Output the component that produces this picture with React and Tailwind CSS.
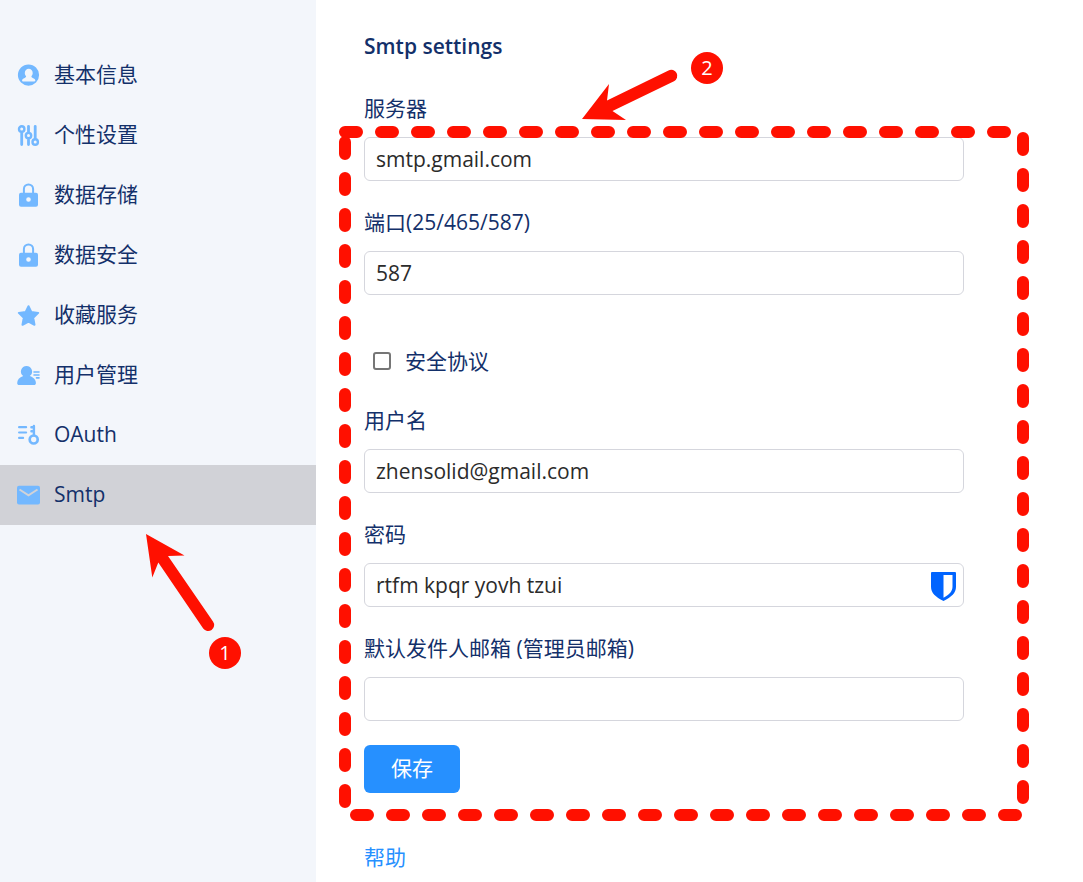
import React from 'react';

function Icon({ children }) {
  return (
    <svg className="size-6 shrink-0 text-[#73b8ff]" viewBox="0 0 24 24" fill="currentColor" aria-hidden="true">
      {children}
    </svg>
  );
}

const ProfileIcon = () => (
  <Icon>
    <path
      fillRule="evenodd"
      d="M11.500 1.500a10.600 10.600 0 1 0 0 21.200 10.600 10.600 0 0 0 0-21.200Zm.200 4.300c2.200 0 4 1.900 4 4.300 0 1.300-.500 2.500-1.300 3.200 0 .900.400 1.300 1.300 1.600 1.700.600 2.600 1.200 2.600 2.700 0 .700-.300.900-.900.900H6c-.700 0-.900-.300-.900-.900 0-1.500 1-2.100 2.600-2.700.900-.300 1.400-.700 1.400-1.600-.800-.700-1.300-1.900-1.300-3.200 0-2.400 1.800-4.300 3.900-4.300Z"
    />
  </Icon>
);

const SlidersIcon = () => (
  <Icon>
    <g fill="none" stroke="currentColor" strokeWidth="2.800" strokeLinecap="round">
      <circle cx="4.700" cy="5.900" r="2.700" strokeWidth="2.400" />
      <path d="M4.700 9.500v12M11.500 3.300v5.500M11.500 16.800v4.700M18.200 3.300v12" />
      <circle cx="11.500" cy="12.600" r="2.700" strokeWidth="2.400" />
      <circle cx="18.200" cy="19" r="2.700" strokeWidth="2.400" />
    </g>
  </Icon>
);

const LockIcon = () => (
  <Icon>
    <path
      fillRule="evenodd"
      d="M4 9.800h1.900V6a5.600 5.600 0 0 1 11.200 0v3.800H19a2 2 0 0 1 2 2v10a2 2 0 0 1-2 2H4a2 2 0 0 1-2-2v-10a2 2 0 0 1 2-2Zm3.900 0h7.200V6a3.600 3.600 0 0 0-7.200 0v3.800Zm3.600 4.400a2.300 2.300 0 1 0 0 4.600 2.300 2.300 0 0 0 0-4.600Z"
    />
  </Icon>
);

const StarIcon = () => (
  <Icon>
    <path
      stroke="currentColor"
      strokeWidth="2"
      strokeLinejoin="round"
      d="m11.500 3.200 2.800 5.800 6.900.900-5 4.900 1.300 7-6-3.300-6 3.300 1.300-7-5-4.900 6.900-.900 2.800-5.800Z"
    />
  </Icon>
);

const UsersIcon = () => (
  <Icon>
    <path d="M9.500 3a5.600 5.600 0 0 1 3.300 10.100c3.800 1.300 6.100 3.900 6.100 6.900 0 1.400-.700 2-2 2H2.200c-1.300 0-2-.600-2-2 0-3 2.200-5.600 6-6.900A5.600 5.600 0 0 1 9.500 3Z" />
    <path d="M17 9h5M17 12h5M19.500 14.900h2.500" fill="none" stroke="currentColor" strokeWidth="1.600" strokeLinecap="round" />
  </Icon>
);

const KeyIcon = () => (
  <Icon>
    <g fill="none" stroke="currentColor" strokeWidth="2.200" strokeLinecap="round">
      <path d="M2.100 4.200h7M2.100 9.500h7M2.100 14.900h4" />
      <circle cx="16.700" cy="16.500" r="4" strokeWidth="2.700" />
      <path d="M16.900 2.900v9.400M16.400 4.200h-2M16.400 8.300h-2" strokeWidth="2.400" />
    </g>
  </Icon>
);

const MailIcon = () => (
  <Icon>
    <rect x="0" y="2.800" width="23" height="18.800" rx="2" />
    <path d="m2.500 6.500 9 5.800 9-5.800" fill="none" stroke="#d1d2d7" strokeWidth="2" />
  </Icon>
);

const menu = [
  { label: '基本信息', Glyph: ProfileIcon },
  { label: '个性设置', Glyph: SlidersIcon },
  { label: '数据存储', Glyph: LockIcon },
  { label: '数据安全', Glyph: LockIcon },
  { label: '收藏服务', Glyph: StarIcon },
  { label: '用户管理', Glyph: UsersIcon },
  { label: 'OAuth', Glyph: KeyIcon },
  { label: 'Smtp', Glyph: MailIcon, active: true },
];

function Field({ id, label, value, children }) {
  return (
    <div className="flex flex-col gap-[14px]">
      <label htmlFor={id} className="leading-[30px]">{label}</label>
      <div className="relative">
        <input
          id={id}
          type="text"
          defaultValue={value}
          className="block h-11 w-full rounded-md border border-[#d5d6dd] bg-white px-[11px] text-[#2b2b2b] outline-none focus:border-[#2690ff]"
        />
        {children}
      </div>
    </div>
  );
}

function Annotations() {
  return (
    <div className="pointer-events-none absolute inset-0 overflow-hidden">
      <svg className="block h-[882px] w-[1083px]" viewBox="0 0 1083 882" fill="#ff1000" aria-hidden="true">
        <path
          d="M345 132H1023V815H345V132"
          fill="none"
          stroke="#ff1000"
          strokeWidth="12"
          strokeLinecap="round"
          strokeDasharray="12 24"
        />
        <path d="M146 534 184.500 555.500 168 556 213 621.500A6 6 0 0 1 203.200 628.500L158.300 562.500 152.300 577.500Z" />
        <path d="M582 119 609 84 607 100.500 668.500 70.500A6 6 0 0 1 674 81.200L612.500 111 626 120Z" />
      </svg>
      <span className="absolute left-[209px] top-[637px] flex size-8 items-center justify-center rounded-full bg-[#ff1000] text-xl text-white">1</span>
      <span className="absolute left-[691px] top-[52px] flex size-8 items-center justify-center rounded-full bg-[#ff1000] text-xl text-white">2</span>
    </div>
  );
}

export default function App() {
  return (
    <div className="relative flex min-h-screen bg-white font-['Open_Sans','Noto_Sans_CJK_SC',sans-serif] text-[21px] text-[#13306a]">
      <nav className="w-[316px] shrink-0 bg-[#f3f6fb] pt-[45px]">
        <ul>
          {menu.map(({ label, Glyph, active }) => (
            <li key={label}>
              <a
                href="#"
                aria-current={active ? 'page' : undefined}
                className={`flex h-[60px] items-center gap-[13px] pl-[17px] leading-[30px] ${active ? 'bg-[#d1d2d7]' : ''}`}
              >
                <Glyph />
                <span className="pb-0.5">{label}</span>
              </a>
            </li>
          ))}
        </ul>
      </nav>

      <main className="min-w-0 flex-1 px-12 pt-[31px]">
        <h1 className="leading-[30px] font-semibold">Smtp settings</h1>
        <form className="mt-8 max-w-[600px]" onSubmit={(e) => e.preventDefault()}>
          <div className="flex flex-col gap-[26px]">
            <Field id="host" label="服务器" value="smtp.gmail.com" />
            <Field id="port" label="端口(25/465/587)" value="587" />
          </div>
          <div className="mt-[51px] mb-[29px] flex items-center gap-[14px] pl-[9px] leading-[30px]">
            <input
              id="secure"
              type="checkbox"
              className="size-[18px] appearance-none rounded-[3px] border-2 border-[#767676] bg-white checked:bg-[#2690ff]"
            />
            <label htmlFor="secure">安全协议</label>
          </div>
          <div className="flex flex-col gap-[26px]">
            <Field id="user" label="用户名" value="zhensolid@gmail.com" />
            <Field id="password" label="密码" value="rtfm kpqr yovh tzui">
              <svg className="absolute top-2 right-2 h-[30px] w-[25px]" viewBox="0 0 25 30" fill="#0064ff" aria-hidden="true">
                <path
                  fillRule="evenodd"
                  d="M1.200 1h22.600c.700 0 1.200.500 1.200 1.200v13.600c0 6.200-4.500 10.200-12.500 14.200C4.500 26 0 22 0 15.800V2.200C0 1.500.500 1 1.200 1Zm11.300 3v22.700c6-3.400 9-6.300 9-11.200V4h-9Z"
                />
              </svg>
            </Field>
            <Field id="sender" label="默认发件人邮箱 (管理员邮箱)" value="" />
          </div>
          <button type="submit" className="mt-6 block h-12 w-24 rounded-md bg-[#2690ff] text-center text-white">
            保存
          </button>
        </form>
        <a href="#" className="mt-[49px] inline-block leading-[30px] text-[#2690ff]">帮助</a>
      </main>

      <Annotations />
    </div>
  );
}
